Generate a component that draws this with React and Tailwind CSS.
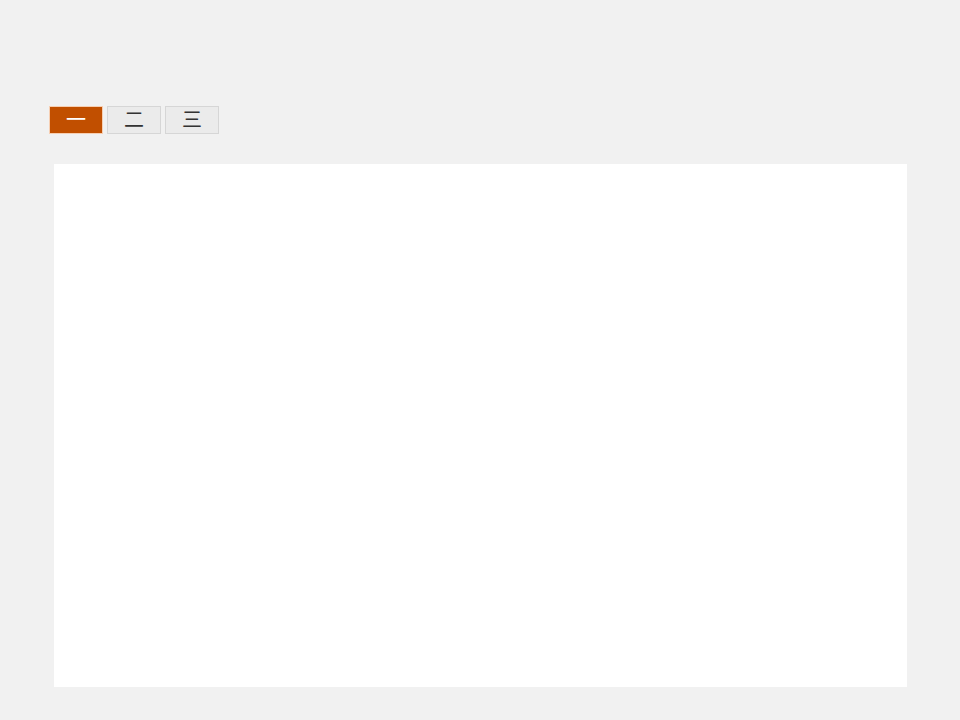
import { useState } from 'react'

const tabs = ['一', '二', '三']

export default function App() {
  const [active, setActive] = useState(0)

  return (
    <div className="min-h-[720px] w-[960px] bg-[#f1f1f1] pt-[106px] pl-[49px]" style={{ fontFamily: '"Noto Sans CJK SC", "Liberation Sans", sans-serif' }}>
      <div className="flex gap-1">
        {tabs.map((t, i) => (
          <button key={t} onClick={() => setActive(i)}
            className={`w-[54px] h-[28px] flex items-center justify-center pb-[3px] text-[20px] leading-none border ${active === i ? 'bg-[#c14f00] border-[#f6cfb3] text-white' : 'bg-[#ebebeb] border-[#d6d6d6] text-[#333]'}`}>
            {t}
          </button>
        ))}
      </div>
      <div className="mt-[30px] ml-[5px] w-[853px] h-[523px] bg-white" />
    </div>
  )
}
